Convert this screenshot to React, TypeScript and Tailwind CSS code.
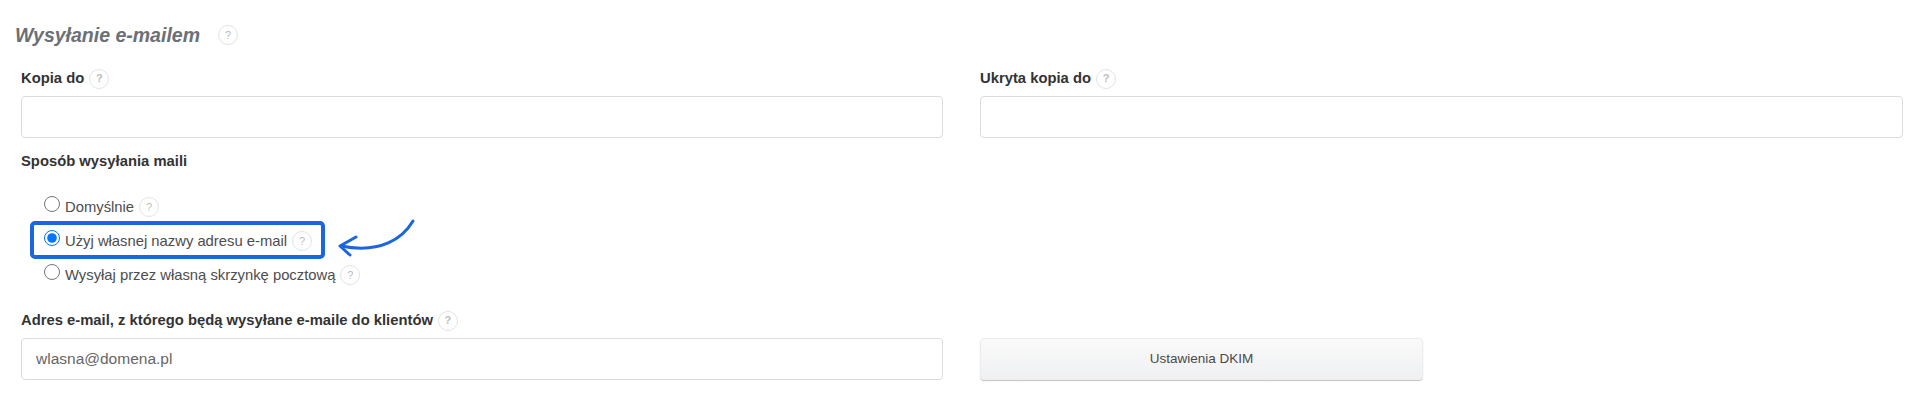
function Help({ className = "" }: { className?: string }) {
  return (
    <span className={`inline-flex h-5 w-5 shrink-0 items-center justify-center rounded-full border border-[#e3e3e3] bg-white text-[11px] leading-none text-[#bcbcbc] ${className}`}>
      ?
    </span>
  );
}

function Field({ label, value }: { label: string; value?: string }) {
  return (
    <div>
      <div className="flex h-[20px] items-center gap-[5px] text-[14.8px] font-bold leading-5 text-[#333333]">
        {label}
        <Help className="mt-[1px]" />
      </div>
      <input
        readOnly
        value={value ?? ""}
        className="mt-[8px] block h-[42px] w-full rounded-[4px] border border-[#dcdcdc] bg-white px-[14px] text-[15.5px] text-[#666666] outline-none"
      />
    </div>
  );
}

function Radio({ label, checked }: { label: string; checked?: boolean }) {
  return (
    <div className="flex h-[34px] items-center pl-[44px]">
      <input
        type="radio"
        readOnly
        checked={!!checked}
        className="mb-[7px] mr-[5px] h-[16px] w-[16px] shrink-0 accent-[#0075ff]"
      />
      <span className="text-[14.8px] leading-5 text-[#4d4d4d]">{label}</span>
      <Help className="ml-[5px]" />
    </div>
  );
}

export default function App() {
  return (
    <div className="h-[402px] w-[1911px] overflow-hidden bg-white pt-[24px] font-['Liberation_Sans',Arial,sans-serif]">
      <div className="flex items-center pl-[15px]">
        <h2 className="text-[19.5px] font-bold italic leading-[22px] text-[#6b6f76]">Wysyłanie e-mailem</h2>
        <Help className="ml-[18px]" />
      </div>

      <div className="mt-[22px] grid grid-cols-[922px_923px] gap-x-[37px] pl-[21px]">
        <Field label="Kopia do" />
        <Field label="Ukryta kopia do" />
      </div>

      <div className="mt-[13px] pl-[21px] text-[14.8px] font-bold leading-5 text-[#333333]">Sposób wysyłania maili</div>

      <div className="mt-[19px]">
        <Radio label="Domyślnie" />
        <div className="relative">
          <Radio label="Użyj własnej nazwy adresu e-mail" checked />
          <div className="absolute left-[30px] top-[-3px] h-[38px] w-[295px] rounded-[5px] border-[4px] border-[#1a66e0]" />
          <svg className="absolute left-[336px] top-[-8px]" width="82" height="44" viewBox="0 0 82 44" fill="none">
            <path d="M77 5C67 22 45 38 5 30" stroke="#1a66e0" strokeWidth="3" strokeLinecap="round" />
            <path d="M20 21L4 30L14 39" stroke="#1a66e0" strokeWidth="3" strokeLinecap="round" strokeLinejoin="round" />
          </svg>
        </div>
        <Radio label="Wysyłaj przez własną skrzynkę pocztową" />
      </div>

      <div className="mt-[18px] grid grid-cols-[922px_443px] items-end gap-x-[37px] pl-[21px]">
        <Field label="Adres e-mail, z którego będą wysyłane e-maile do klientów" value="wlasna@domena.pl" />
        <button className="h-[42px] rounded-[4px] border border-[#ececec] bg-gradient-to-b from-[#fafafa] to-[#eff0f2] text-[13.5px] text-[#4a4a4a] shadow-[0_1px_1px_#c4c4c4]">
          Ustawienia DKIM
        </button>
      </div>
    </div>
  );
}
